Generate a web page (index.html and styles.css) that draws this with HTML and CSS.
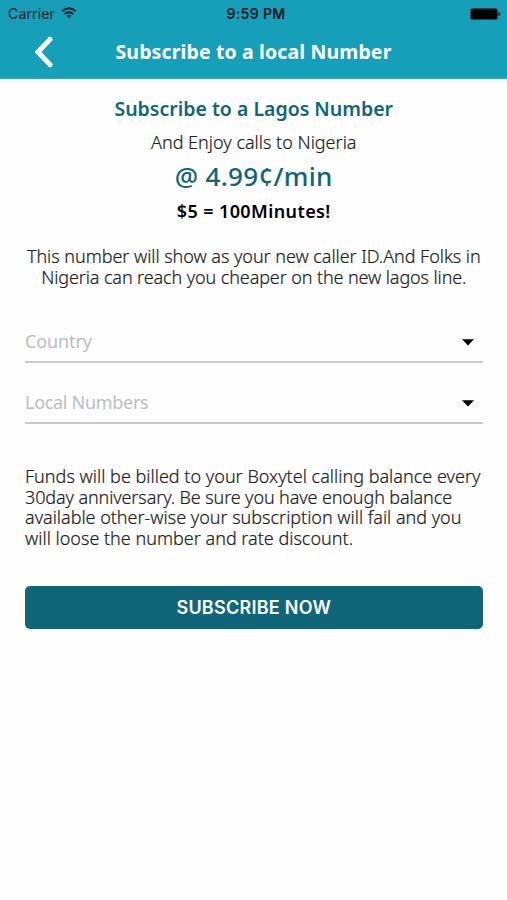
FILE: index.html
```html
<!DOCTYPE html>
<html lang="en">
<head>
<meta charset="utf-8">
<title>Subscribe to a local Number</title>
<link rel="stylesheet" href="styles.css">
</head>
<body>
<header class="header">
  <div class="status">
    <div class="carrier"><span class="carrier-name">Carrier</span>
      <svg class="wifi" width="16" height="12" viewBox="0 0 16 12" fill="none" stroke="#051d23" stroke-width="1.9"><path d="M1.2 4.3Q8-1.6 14.8 4.3M3.7 7Q8 3.3 12.3 7"/><path d="M5.6 8.7Q8 7 10.4 8.7L8 11.3Z" fill="#051d23" stroke="none"/></svg>
    </div>
    <span class="clock">9:59 PM</span>
    <svg class="battery" width="31" height="12" viewBox="0 0 31 12"><rect x=".5" y=".5" width="27" height="11" rx="1.5"/><path d="M28.5 4Q30.3 4.5 30.3 6T28.5 8Z"/></svg>
  </div>
  <nav class="navbar">
    <svg class="back" width="20" height="32" viewBox="0 0 20 32" fill="none" stroke="#fff" stroke-width="5" stroke-linecap="round" stroke-linejoin="miter"><path d="M16 3.4L4 16L16 28.6"/></svg>
    <h1 class="title">Subscribe to a local Number</h1>
  </nav>
</header>
<main class="content">
  <section class="offer">
    <h2 class="offer-title">Subscribe to a Lagos Number</h2>
    <p class="offer-sub">And Enjoy calls to Nigeria</p>
    <p class="price">@ 4.99¢/min</p>
    <p class="minutes">$5 = 100Minutes!</p>
  </section>
  <p class="copy note"><span class="line n1">This number will show as your new caller ID.And Folks in</span> <span class="line n2">Nigeria can reach you cheaper on the new lagos line.</span></p>
  <div class="field"><span class="f1">Country</span><svg class="caret" width="12" height="7" viewBox="0 0 12 7"><path d="M0 .3H12L6 6.5Z"/></svg></div>
  <div class="field"><span class="f2">Local Numbers</span><svg class="caret" width="12" height="7" viewBox="0 0 12 7"><path d="M0 .3H12L6 6.5Z"/></svg></div>
  <p class="copy terms"><span class="line t1">Funds will be billed to your Boxytel calling balance every</span> <span class="line t2">30day anniversary. Be sure you have enough balance</span> <span class="line t3">available other-wise your subscription will fail and you</span> <span class="line t4">will loose the number and rate discount.</span></p>
  <button class="submit" type="button">SUBSCRIBE NOW</button>
</main>
</body>
</html>
```
FILE: styles.css
```css
* { box-sizing: border-box; }
body { margin: 0; min-height: 900px; background: #fefefe; color: #222; font-family: "Noto Sans", "Open Sans", sans-serif; }
h1, h2, p { margin: 0; }
.header { height: 79px; background: #159fb9; border-bottom: 1px solid #35abc1; }
.status { height: 27px; padding: 0 6px 0 8px; display: grid; grid-template-columns: 1fr auto 1fr; align-items: center; font: 14px/27px Inter, sans-serif; color: #051d23; }
.carrier { display: flex; align-items: center; gap: 6px; }
.carrier-name { letter-spacing: 0.15px; }
.wifi { margin-top: -2px; }
.clock { font-weight: 600; letter-spacing: 0.35px; margin-left: 3px; }
.battery { justify-self: end; }
.navbar { height: 50px; display: grid; grid-template-columns: 80px 1fr 80px; align-items: center; }
.back { margin-left: 34px; }
.title { text-align: center; color: #fff; font-size: 19.5px; font-weight: 700; line-height: 50px; white-space: nowrap; letter-spacing: 0.13px; }
.content { padding: 15px 24.5px 0 25px; }
.offer { text-align: center; white-space: nowrap; }
.offer-title { color: #0f6678; font-size: 19.5px; font-weight: 600; line-height: 30px; }
.offer-sub { font-size: 18px; font-weight: 300; line-height: 36px; -webkit-text-stroke: 0.2px #222; }
.price { color: #0f6678; font-size: 26px; font-weight: 500; line-height: 32px; margin-bottom: 2px; letter-spacing: 0.3px; }
.minutes { color: #000; font-size: 18px; font-weight: 600; line-height: 34px; letter-spacing: 0.4px; }
.copy { font-size: 18px; font-weight: 300; line-height: 20.5px; white-space: nowrap; -webkit-text-stroke: 0.2px #222; }
.line { display: table; }
.note { margin-top: 18px; text-align: center; }
.note .line { margin: 0 auto; }
.n1 { letter-spacing: -0.05px; }
.n2 { letter-spacing: -0.11px; }
.t1 { letter-spacing: 0.01px; }
.t2 { letter-spacing: -0.12px; }
.t3 { letter-spacing: -0.02px; }
.field { height: 61px; display: flex; align-items: center; justify-content: space-between; padding: 18px 9px 0 0; border-bottom: 2px solid #cbcbcb; color: #bdbdc2; font-size: 18px; }
.f1 { letter-spacing: -0.1px; }
.f2 { letter-spacing: -0.3px; }
.note + .field { margin-top: 15px; }
.caret { margin-top: 3px; }
.terms { margin-top: 42px; }
.submit { display: block; width: 100%; height: 43px; margin-top: 38px; border: 0; border-radius: 5px; background: #0f6679; color: #fff; font: 600 18px/43px Inter, sans-serif; letter-spacing: 0.25px; padding: 0; }
```
